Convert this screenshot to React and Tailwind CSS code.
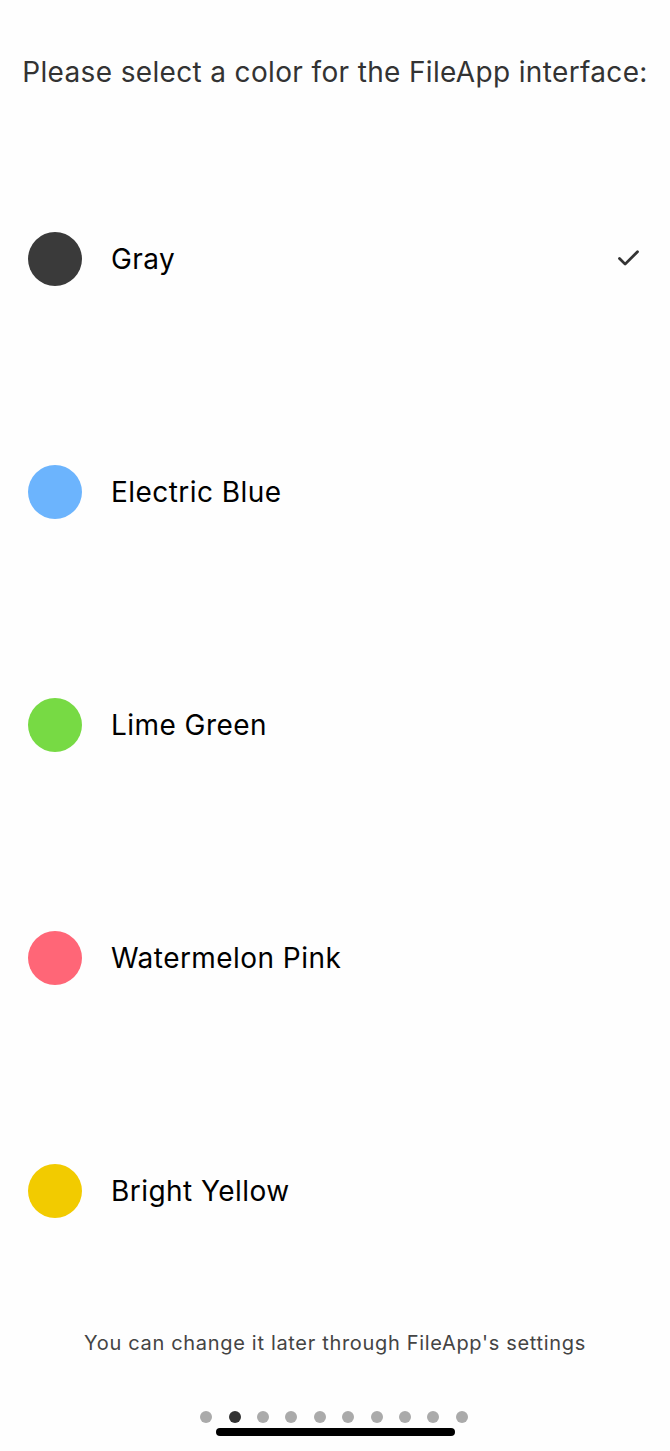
import React from "react";
import { Check } from "lucide-react";

const colors = [
  { name: "Gray", hex: "bg-[#3a3a3a]", selected: true },
  { name: "Electric Blue", hex: "bg-[#6cb4fd]" },
  { name: "Lime Green", hex: "bg-[#77da44]" },
  { name: "Watermelon Pink", hex: "bg-[#ff6677]" },
  { name: "Bright Yellow", hex: "bg-[#f2cb00]" },
];

export default function App() {
  return (
    <div
      className="w-[670px] h-[1451px] bg-[#fefefe] flex flex-col overflow-hidden"
      style={{ fontFamily: "Inter, 'Noto Sans', sans-serif" }}
    >
      <h1 className="pt-[55px] h-[142px] text-center text-[28px] leading-[34px] text-[#333] tracking-[0.35px] whitespace-nowrap">
        Please select a color for the FileApp interface:
      </h1>

      <div className="flex flex-col">
        {colors.map((c) => (
          <div key={c.name} className="h-[233px] flex items-center pl-[28px] pr-[28px]">
            <div className={`w-[54px] h-[54px] rounded-full ${c.hex}`} />
            <span className="ml-[29px] text-[28px] text-black flex-1 tracking-[0.45px]">{c.name}</span>
            {c.selected && <Check className="w-[27px] h-[27px] text-[#333]" strokeWidth={2.5} />}
          </div>
        ))}
      </div>

      <p className="mt-[24px] text-center text-[20px] leading-[24px] text-[#444] tracking-[0.68px]">
        You can change it later through FileApp's settings
      </p>

      <div className="mt-[56px] flex justify-center gap-[16.4px] pr-[2px]">
        {Array.from({ length: 10 }).map((_, i) => (
          <div
            key={i}
            className={`w-[12px] h-[12px] rounded-full ${i === 1 ? "bg-[#333]" : "bg-[#aaa]"}`}
          />
        ))}
      </div>

      <div className="mt-[5px] mx-auto w-[239px] h-[8px] rounded-full bg-black" />
    </div>
  );
}
